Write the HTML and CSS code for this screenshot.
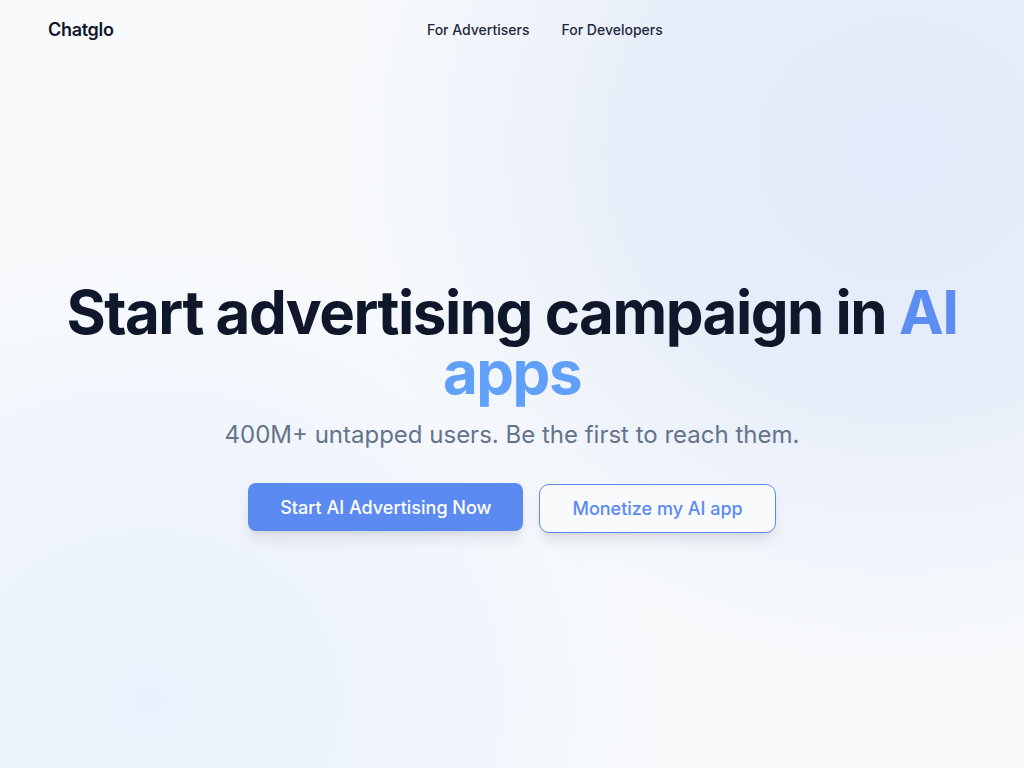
FILE: index.html
```html
<!DOCTYPE html>
<html lang="en">
<head>
<meta charset="utf-8">
<title>Chatglo</title>
<link rel="stylesheet" href="styles.css">
</head>
<body>
<div class="page">
  <header class="header">
    <div class="logo">Chatglo</div>
    <nav class="nav">
      <a href="#" class="nav-link">For Advertisers</a>
      <a href="#" class="nav-link">For Developers</a>
    </nav>
    <div class="spacer"></div>
  </header>
  <main class="hero">
    <h1 class="title">Start advertising campaign in <span class="accent-a">AI</span> <span class="accent-b">apps</span></h1>
    <p class="subtitle">400M+ untapped users. Be the first to reach them.</p>
    <div class="actions">
      <a href="#" class="btn btn-primary">Start AI Advertising Now</a>
      <a href="#" class="btn btn-outline">Monetize my AI app</a>
    </div>
  </main>
</div>
</body>
</html>
```

FILE: styles.css
```css
* { box-sizing: border-box; }
html, body { margin: 0; padding: 0; }
body {
  font-family: Inter, "Noto Sans", sans-serif;
  color: #0f172a;
  background-color: #f8fafc;
  background-image:
    radial-gradient(ellipse 560px 520px at 900px 150px, rgba(227,234,249,1) 0%, rgba(229,236,249,0.9) 45%, rgba(248,250,252,0) 100%),
    radial-gradient(ellipse 520px 460px at 150px 700px, rgba(234,241,252,1) 0%, rgba(236,242,252,0.75) 50%, rgba(248,250,252,0) 100%);
  min-height: 768px;
}
.page { min-height: 768px; display: flex; flex-direction: column; }
.header {
  display: flex;
  justify-content: space-between;
  align-items: center;
  padding: 0 48px;
  height: 58px;
}
.logo {
  font-size: 18px;
  font-weight: 600;
  color: #0f172a;
  letter-spacing: -0.3px;
}
.nav { display: flex; gap: 32px; }
.nav-link {
  font-size: 14px;
  font-weight: 500;
  color: #1e293b;
  text-decoration: none;
}
.spacer { width: 0; }
.hero {
  display: flex;
  flex-direction: column;
  align-items: center;
  text-align: center;
  padding-top: 224px;
}
.title {
  margin: 0;
  font-size: 60px;
  line-height: 60px;
  font-weight: 700;
  letter-spacing: -1.5px;
  color: #0f172a;
  max-width: 920px;
}
.accent-a { color: #5b8df2; }
.accent-b { color: #60a0f8; }
.subtitle {
  margin: 17px 0 0;
  font-size: 24px;
  line-height: 32px;
  color: #64748b;
}
.actions {
  display: flex;
  gap: 16px;
  margin-top: 32px;
}
.btn {
  display: flex;
  align-items: center;
  justify-content: center;
  height: 48px;
  padding: 0 32px;
  font-size: 18px;
  font-weight: 500;
  border-radius: 8px;
  text-decoration: none;
  box-shadow: 0 10px 15px -3px rgba(15,23,42,0.1), 0 4px 6px -4px rgba(15,23,42,0.1);
}
.btn-primary {
  background: #5b8af0;
  color: #ffffff;
}
.btn-outline {
  background: #f8fafc;
  color: #5b8af0;
  border: 1px solid #5b8af0;
  height: 49px;
  margin-top: 1px;
  border-radius: 10px;
}
```
